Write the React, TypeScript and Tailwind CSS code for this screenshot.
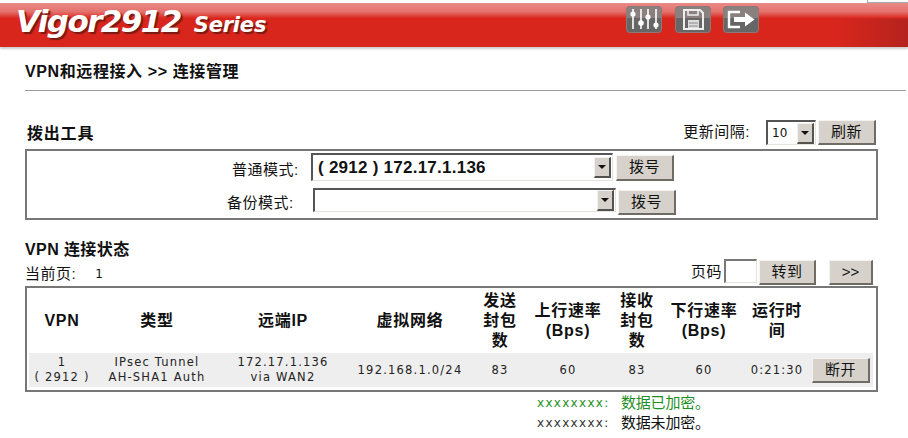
import { ReactNode } from 'react'

const BTN = 'flex items-center justify-center bg-[#d6d2cb] border-t border-l border-t-[#f4f2ee] border-l-[#f4f2ee] border-r-2 border-b-2 border-r-[#6f6c66] border-b-[#6f6c66] text-[15px] tracking-[0.500px] text-[#111]'

function Button({ className, children }: { className: string; children: ReactNode }) {
  return <div className={`${BTN} ${className}`}>{children}</div>
}

function Select({ className, text, textClass }: { className: string; text?: string; textClass?: string }) {
  return (
    <div className={`flex items-center justify-between bg-white border-t-2 border-l-2 border-t-[#555] border-l-[#555] border-r border-b border-r-[#e4e2dc] border-b-[#e4e2dc] pr-px ${className}`}>
      <span className={`whitespace-nowrap ${textClass ?? ''}`}>{text}</span>
      <div className="flex h-[21px] w-[17px] items-center justify-center bg-[#d6d2cb] border-t border-l border-t-[#f4f2ee] border-l-[#f4f2ee] border-r-2 border-b-2 border-r-[#55534f] border-b-[#55534f]">
        <svg width="8" height="4" viewBox="0 0 8 4"><path d="M0 0h8L4 4z" fill="#111" /></svg>
      </div>
    </div>
  )
}

function Tile({ children }: { children: ReactNode }) {
  return (
    <svg width="36" height="27" viewBox="0 0 36 27">
      <rect x="0.500" y="0.500" width="35" height="26" rx="3" fill="#666" stroke="#8a7a7a" />
      <path d="M1 3a2 2 0 0 1 2-2h30a2 2 0 0 1 2 2v9H1z" fill="#8a8080" />
      {children}
    </svg>
  )
}

function MixerIcon() {
  return (
    <Tile>
      <path d="M7 3v20M15 3v20M22 3v20M30 3v20" stroke="#fff" strokeWidth="1.600" />
      <g fill="#fff">
        <circle cx="7" cy="8" r="2.600" />
        <circle cx="15" cy="17" r="2.800" />
        <circle cx="22" cy="11" r="2.600" />
        <circle cx="30" cy="19" r="2.600" />
      </g>
    </Tile>
  )
}

function SaveIcon() {
  return (
    <Tile>
      <path d="M9 4h16l3 3v16H9z" fill="none" stroke="#eee" strokeWidth="2" />
      <path d="M13 4v5h10V4" fill="none" stroke="#eee" strokeWidth="1.600" />
      <rect x="13" y="14" width="11" height="8" fill="#ddd" />
      <path d="M14 17h9M14 20h9" stroke="#888" />
    </Tile>
  )
}

function ExitIcon() {
  return (
    <Tile>
      <path d="M17 6H6v15h11" fill="none" stroke="#fff" strokeWidth="2.400" />
      <path d="M11 11h11V6.500l9.500 7-9.500 7V16H11z" fill="#fff" />
    </Tile>
  )
}

const rows = [
  { c: 'w-[66px]', h: 'VPN', v: ['1', '( 2912 )'] },
  { c: 'w-[124px]', h: '类型', v: ['IPsec Tunnel', 'AH-SHA1 Auth'] },
  { c: 'w-[128px]', h: '远端IP', v: ['172.17.1.136', 'via WAN2'] },
  { c: 'w-[126px]', h: '虚拟网络', v: ['192.168.1.0/24'] },
  { c: 'w-[54px]', h: '发送 封包 数', v: ['83'] },
  { c: 'w-[82px]', h: '上行速率 (Bps)', v: ['60'] },
  { c: 'w-[56px]', h: '接收 封包 数', v: ['83'] },
  { c: 'w-[78px]', h: '下行速率 (Bps)', v: ['60'] },
  { c: 'w-[68px]', h: '运行时 间', v: ['0:21:30'] },
]

export default function App() {
  return (
    <div className="relative h-[438px] w-[908px] overflow-hidden bg-white font-['Liberation_Sans','Noto_Sans_CJK_SC',sans-serif] text-[#111]">
      <div className="absolute right-0 top-0 h-[3px] w-[41px] border-b border-l border-[#aaa] bg-white" />

      {/* banner */}
      <div className="mt-[3px] h-[44px] bg-[linear-gradient(90deg,#d9261c_0%,#d9261c_92%,#b5231e_100%)] shadow-[0_2px_2px_#ccc]">
        <div className="relative flex h-full bg-[linear-gradient(180deg,#e98a86_0%,#e4716c_20%,#da2a20_34%,rgba(218,38,28,0)_36%)]">
          <div className="flex w-[626px] items-baseline pl-4 font-['DejaVu_Sans',sans-serif] font-bold italic text-white [text-shadow:2px_2px_1px_#7a1a14]">
            <span className="text-[31px] leading-[36px] tracking-[-1.600px]">Vigor2912</span>
            <span className="ml-[13px] text-[21px] leading-[36px] tracking-[-0.200px]">Series</span>
          </div>
          <div className="flex gap-[13px] pt-[3px]">
            <MixerIcon />
            <SaveIcon />
            <div className="-ml-px"><ExitIcon /></div>
          </div>
        </div>
      </div>

      {/* breadcrumb */}
      <div className="ml-[25px] mt-[14px] text-[16px] font-bold leading-[22px] tracking-[0.600px]">VPN和远程接入 &gt;&gt; 连接管理</div>
      <div className="ml-[25px] mt-[7px] h-px w-[881px] bg-[#999]" />

      {/* dial-out tools */}
      <div className="ml-[25px] mt-[29px] flex h-[29px] w-[853px] items-start justify-between">
        <div className="pl-[2px] pt-[4px] text-[16px] font-bold leading-[20px] tracking-[0.800px]">拨出工具</div>
        <div className="flex items-center pr-[2px]">
          <span className="mr-[16px] text-[15px] tracking-[0.500px]">更新间隔:</span>
          <Select className="h-[25px] w-[50px]" text="10" textClass="pl-1 font-['DejaVu_Sans'] text-[12px]" />
          <Button className="ml-[2px] h-[25px] w-[58px]">刷新</Button>
        </div>
      </div>
      <div className="ml-[25px] flex h-[71px] w-[853px] flex-col border-2 border-[#777]">
        <div className="flex h-[35px] items-start pl-[205px]">
          <span className="w-[79px] pt-[9px] text-[15px] leading-[20px] tracking-[0.500px]">普通模式:</span>
          <Select className="mt-[2px] h-[28px] w-[302px]" text="( 2912 ) 172.17.1.136" textClass="pl-[5px] text-[17px] font-bold tracking-[0.250px]" />
          <Button className="ml-[3px] mt-[4px] h-[26px] w-[58px]">拨号</Button>
        </div>
        <div className="flex items-start pl-[200px]">
          <span className="w-[86px] pt-[7px] text-[15px] leading-[20px] tracking-[0.500px]">备份模式:</span>
          <Select className="mt-[2px] h-[24px] w-[303px]" />
          <Button className="ml-[2px] mt-[4px] h-[25px] w-[58px]">拨号</Button>
        </div>
      </div>

      {/* status */}
      <div className="ml-[25px] mt-[20px] text-[16px] font-bold leading-[20px] tracking-[0.400px]">VPN 连接状态</div>
      <div className="ml-[25px] flex h-[26px] w-[848px] items-start justify-between">
        <div className="flex items-center pt-[4px] text-[15px] leading-[20px] tracking-[0.500px]">
          当前页:<span className="ml-[19px] font-['DejaVu_Sans'] text-[12px]">1</span>
        </div>
        <div className="flex items-start">
          <span className="mt-[2px] mr-[2px] text-[15px] leading-[20px] tracking-[0.500px]">页码</span>
          <div className="-mt-px h-[24px] w-[33px] border-t-2 border-l-2 border-t-[#777] border-l-[#777] border-r border-b border-r-[#e4e2dc] border-b-[#e4e2dc]" />
          <Button className="ml-[2px] h-[25px] w-[57px]">转到</Button>
          <Button className="ml-[13px] h-[25px] w-[44px] text-[14px] tracking-normal">&gt;&gt;</Button>
        </div>
      </div>

      <div className="ml-[25px] h-[106px] w-[853px] border-2 border-[#777] pl-[2px] pr-[3px]">
        <div className="flex h-[65px] items-center">
          {rows.map(r => (
            <div key={r.h} className={`${r.c} whitespace-nowrap text-center text-[16px] font-bold leading-[20px] tracking-[0.700px]`}>
              {r.h.split(' ').map(l => <div key={l}>{l}</div>)}
            </div>
          ))}
        </div>
        <div className="flex h-[34px] items-center bg-[#eee] font-['DejaVu_Sans',sans-serif] text-[11.500px] leading-[15px] tracking-[1.200px] text-[#222]">
          {rows.map(r => (
            <div key={r.h} className={`${r.c} whitespace-nowrap text-center`}>
              {r.v.map(l => <div key={l}>{l}</div>)}
            </div>
          ))}
          <Button className="ml-px h-[25px] w-[58px] font-['Liberation_Sans','Noto_Sans_CJK_SC',sans-serif]">断开</Button>
        </div>
      </div>

      {/* legend */}
      <div className="ml-[537px] mt-px text-[15px] leading-[20px] tracking-[-0.200px]">
        <div className="flex h-[20px] items-center text-[#1f8f1f]"><span className="w-[84px] font-['DejaVu_Sans'] text-[12px] tracking-[1.300px]">xxxxxxxx:</span>数据已加密。</div>
        <div className="flex h-[20px] items-center"><span className="w-[84px] font-['DejaVu_Sans'] text-[12px] tracking-[1.300px] text-[#333]">xxxxxxxx:</span>数据未加密。</div>
      </div>
    </div>
  )
}
